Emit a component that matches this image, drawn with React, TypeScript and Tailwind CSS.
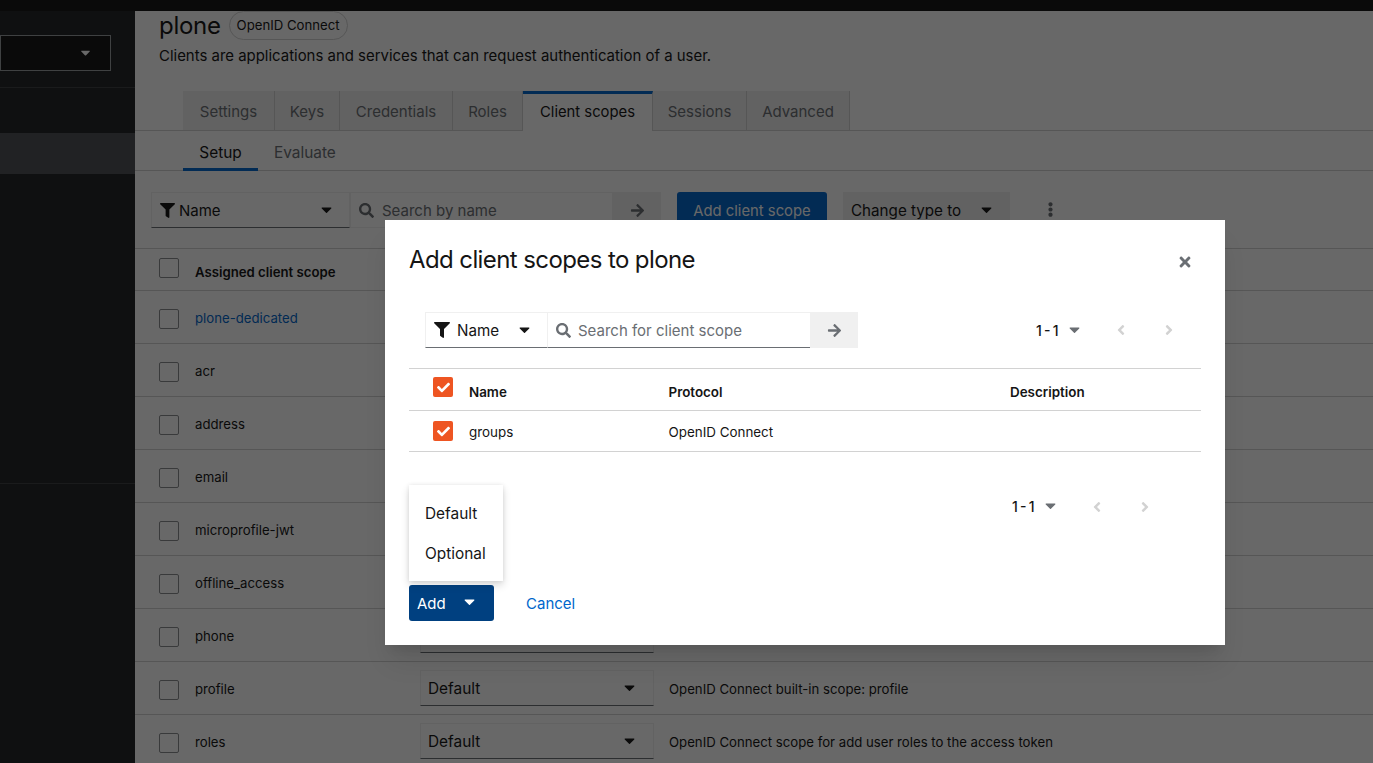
import { FaArrowRight, FaCaretDown, FaCheck, FaEllipsisV, FaFilter, FaSearch, FaTimes, FaAngleLeft, FaAngleRight } from 'react-icons/fa';

const rows = [
  { name: 'plone-dedicated', link: true },
  { name: 'acr' },
  { name: 'address' },
  { name: 'email' },
  { name: 'microprofile-jwt' },
  { name: 'offline_access' },
  { name: 'phone', select: true },
  { name: 'profile', select: true, desc: 'OpenID Connect built-in scope: profile' },
  { name: 'roles', select: true, desc: 'OpenID Connect scope for add user roles to the access token' },
];

const tabs = [
  { label: 'Settings', w: 'w-[92px]' },
  { label: 'Keys', w: 'w-[65px]' },
  { label: 'Credentials', w: 'w-[113px]' },
  { label: 'Roles', w: 'w-[70px]' },
  { label: 'Client scopes', w: 'w-[130px]', active: true },
  { label: 'Sessions', w: 'w-[94px]' },
  { label: 'Advanced', w: 'w-[103px]' },
];

function Pagination() {
  return (
    <div className="flex items-center text-[14px] text-[#151515]">
      <span className="w-[24px] whitespace-nowrap font-medium [word-spacing:-1.5px]">1 - 1</span>
      <FaCaretDown className="ml-[6px] -mt-[2px] text-[17px] text-[#6a6e73]" />
      <FaAngleLeft className="ml-[30px] text-[16px] text-[#d2d2d2]" />
      <FaAngleRight className="ml-[32px] text-[16px] text-[#d2d2d2]" />
    </div>
  );
}

function Check({ className }: { className?: string }) {
  return (
    <div className={`flex h-[20px] w-[20px] items-center justify-center rounded-[2px] bg-[#ee5522] ${className ?? ''}`}>
      <FaCheck className="text-[13px] text-white" />
    </div>
  );
}

export default function App() {
  return (
    <div className="relative h-[763px] w-[1373px] overflow-hidden bg-white font-['Inter','Liberation_Sans',sans-serif] text-[#151515]">
      <div className="h-[11px] bg-[#151515]" />
      <div className="flex h-[752px]">
        <aside className="w-[135px] shrink-0 bg-[#212427]">
          <div className="h-[77px] border-b border-[#3c3f42] pt-[24px]">
            <div className="flex h-[36px] w-[111px] items-center justify-end border border-[#9a9da0] bg-[#151515] pr-[17px]">
              <FaCaretDown className="-mt-[2px] text-[15px] text-white" />
            </div>
          </div>
          <div className="mt-[45px] h-[41px] bg-[#4f5255]" />
          <div className="mt-[309px] border-b border-[#3c3f42]" />
        </aside>

        <main className="min-w-0 flex-1 overflow-hidden">
          <div className="flex h-[29px] items-center pl-[24px]">
            <h1 className="text-[24px] leading-[29px] tracking-[-0.3px]">plone</h1>
            <span className="ml-[8px] rounded-full border border-[#d2d2d2] px-[7px] py-[4px] text-[13.2px] leading-[19px] text-[#151515]">OpenID Connect</span>
          </div>
          <p className="mt-[5px] pl-[24px] text-[14.95px] leading-[22px]">Clients are applications and services that can request authentication of a user.</p>

          <div className="mt-[24px] flex h-[40px] border-b border-[#d2d2d2] pl-[48px] text-[15px]">
            {tabs.map((t) =>
              t.active ? (
                <div key={t.label} className={`flex h-[40px] items-center justify-center border-t-[3px] border-r border-[#0066cc] border-r-[#d2d2d2] bg-white ${t.w} text-[14.8px] text-[#151515]`}>{t.label}</div>
              ) : (
                <div key={t.label} className={`flex h-[39px] items-center justify-center border-r border-[#d2d2d2] bg-[#f0f0f0] pt-[3px] ${t.w} text-[#6a6e73]`}>{t.label}</div>
              ),
            )}
          </div>

          <div className="flex h-[40px] border-b border-[#d2d2d2] pl-[48px] text-[15.4px]">
            <div className="flex h-[40px] w-[75px] items-center justify-center border-b-[3px] border-[#0066cc] pt-[6px]">Setup</div>
            <div className="flex h-[40px] items-center pl-[16px] pt-[3px] text-[#6a6e73]">Evaluate</div>
          </div>

          <div className="flex h-[78px] items-start border-b border-[#d2d2d2] pl-[16px] pt-[21px] text-[15px]">
            <div className="flex h-[36px] w-[199px] items-center border border-[#f0f0f0] border-b-[#6a6e73] pl-[8px] pr-[14px]">
              <FaFilter className="text-[15px]" />
              <span className="ml-[4px] flex-1 pt-[2px]">Name</span>
              <FaCaretDown className="-mt-[2px] text-[17px]" />
            </div>
            <div className="flex h-[36px] w-[263px] items-center border border-[#f0f0f0] pl-[8px] text-[#6a6e73]">
              <FaSearch className="text-[15px]" />
              <span className="ml-[8px] pt-[2px]">Search by name</span>
            </div>
            <div className="flex h-[36px] w-[48px] items-center justify-center bg-[#f0f0f0] text-[#6a6e73]"><FaArrowRight className="text-[15px]" /></div>
            <div className="ml-[16px] flex h-[36px] w-[150px] items-center justify-center rounded-[3px] bg-[#0066cc] pt-[2px] text-[14.8px] text-white">Add client scope</div>
            <div className="ml-[16px] flex h-[36px] w-[167px] items-center justify-between bg-[#f0f0f0] pl-[8px] pr-[15px]">
              <span className="pt-[2px] text-[15.2px]">Change type to</span>
              <FaCaretDown className="-mt-[2px] text-[17px]" />
            </div>
            <FaEllipsisV className="ml-[33px] mt-[10px] text-[15px] text-[#6a6e73]" />
          </div>

          <div className="flex h-[42px] items-start border-b border-[#d2d2d2] pl-[24px] pt-[9px]">
            <div className="h-[20px] w-[20px] rounded-[2px] border border-[#8a8d90] bg-white" />
            <span className="ml-[16px] mt-[4px] text-[13.2px] leading-[20px] font-semibold">Assigned client scope</span>
          </div>

          {rows.map((r) => (
            <div key={r.name} className="flex h-[53px] items-center border-b border-[#d2d2d2] pl-[24px] text-[13.2px]">
              <div className="mt-[4px] h-[20px] w-[20px] rounded-[2px] border border-[#8a8d90] bg-white" />
              <span className={`ml-[16px] w-[225px] pt-[4px] ${r.link ? 'text-[#0066cc]' : ''}`}>{r.name}</span>
              {r.select && (
                <div className="flex h-[36px] w-[234px] items-center justify-between border border-[#f0f0f0] border-b-[#6a6e73] pl-[7px] pr-[15px] text-[15.4px]">
                  <span className="pt-[2px]">Default</span>
                  <FaCaretDown className="-mt-[1px] text-[17px]" />
                </div>
              )}
              {r.desc && <span className="ml-[15px] pt-[4px]">{r.desc}</span>}
            </div>
          ))}
        </main>
      </div>

      {/* backdrop */}
      <div className="absolute inset-0 bg-[rgba(3,3,3,0.6)]" />

      <div className="absolute left-[385px] top-[220px] flex h-[425px] w-[840px] flex-col bg-white px-[24px] pt-[24px] shadow-xl">
        <div className="flex h-[30px] items-center justify-between">
          <h2 className="pt-[2px] text-[24px] leading-[30px] font-normal tracking-[-0.6px] text-[#151515]">Add client scopes to plone</h2>
          <FaTimes className="mr-[8px] mt-[6px] text-[16px] text-[#6a6e73]" />
        </div>

        <div className="mt-[38px] flex h-[36px] items-center pl-[16px] pr-[24px] text-[15px]">
          <div className="flex h-[36px] w-[123px] items-center border border-[#f0f0f0] border-b-[#6a6e73] pl-[8px] pr-[14px]">
            <FaFilter className="text-[16px]" />
            <span className="ml-[7px] flex-1 pt-[2px] text-[15.2px]">Name</span>
            <FaCaretDown className="-mt-[2px] text-[17px]" />
          </div>
          <div className="flex h-[36px] w-[262px] items-center border-y border-[#f0f0f0] border-b-[#6a6e73] pl-[8px] text-[#6a6e73]">
            <FaSearch className="text-[15px]" />
            <span className="ml-[7px] pt-[2px]">Search for client scope</span>
          </div>
          <div className="flex h-[36px] w-[48px] items-center justify-center bg-[#f0f0f0] text-[#6a6e73]"><FaArrowRight className="text-[15px]" /></div>
          <div className="ml-auto"><Pagination /></div>
        </div>

        <div className="mt-[20px] flex h-[43px] border-y border-[#d2d2d2] text-[13.4px] font-semibold">
          <Check className="ml-[24px] mt-[8px]" />
          <span className="ml-[16px] mt-[13px] w-[199.5px]">Name</span>
          <span className="mt-[13px] w-[341.5px]">Protocol</span>
          <span className="mt-[13px]">Description</span>
        </div>
        <div className="flex h-[41px] items-center border-b border-[#d2d2d2] text-[13.4px]">
          <Check className="ml-[24px]" />
          <span className="ml-[16px] w-[199.5px] pt-[3px]">groups</span>
          <span className="pt-[3px]">OpenID Connect</span>
        </div>

        <div className="mt-[44px] flex justify-end pr-[48px]"><Pagination /></div>

        <div className="relative mt-[68px] flex items-center text-[15px]">
          <div className="absolute bottom-[40px] left-0 flex h-[96px] w-[94px] flex-col justify-center bg-white pl-[16px] text-[15.4px] text-[#151515] shadow-[0_4px_8px_0_rgba(3,3,3,0.16),0_0_4px_0_rgba(3,3,3,0.08)]">
            <div className="flex h-[40px] items-center pt-[2px]">Default</div>
            <div className="flex h-[40px] items-center pt-[2px]">Optional</div>
          </div>
          <div className="flex h-[36px] w-[85px] items-center rounded-[3px] bg-[#004080] pl-[8px] text-white">
            <span className="pt-[2px]">Add</span>
            <FaCaretDown className="ml-[15px] -mt-[3px] text-[17px]" />
          </div>
          <span className="ml-[32px] pt-[2px] text-[#0066cc]">Cancel</span>
        </div>
      </div>
    </div>
  );
}
